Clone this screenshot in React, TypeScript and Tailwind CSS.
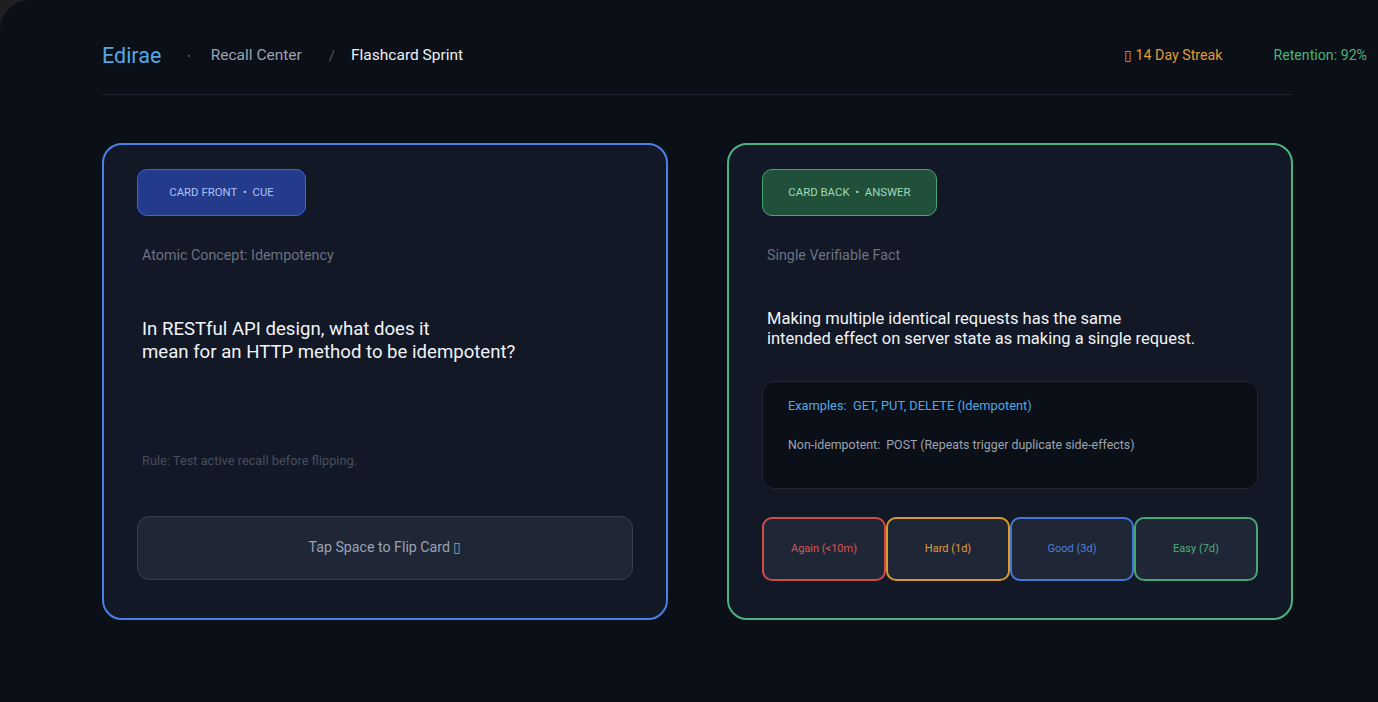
const ratings = [
  { label: 'Again (<10m)', cls: 'border-[#d14b4b] text-[#d9534f]' },
  { label: 'Hard (1d)', cls: 'border-[#d99a2b] text-[#e09b36]' },
  { label: 'Good (3d)', cls: 'border-[#4677d8] text-[#4f7fdc]' },
  { label: 'Easy (7d)', cls: 'border-[#45a673] text-[#4caf7a]' },
];

function Header() {
  return (
    <header className="flex h-10 w-[1265px] items-center justify-between">
      <div className="flex items-center">
        <span className="text-[21.5px] text-[#52a8e3]">Edirae</span>
        <span className="ml-[26px] text-[10px] text-[#4b5563]">•</span>
        <span className="ml-[20px] text-[15.5px] text-[#9aa3b1]">Recall Center</span>
        <span className="ml-[27px] text-[15px] text-[#4b5563]">/</span>
        <span className="ml-[16px] text-[15.5px] text-[#eef0f4]">Flashcard Sprint</span>
      </div>
      <div className="flex items-center text-[14.2px]">
        <span className="text-[#e09b36]">▯ 14 Day Streak</span>
        <span className="ml-[51px] text-[#4caf7a]">Retention: 92%</span>
      </div>
    </header>
  );
}

function FrontCard() {
  return (
    <section className="flex h-[477px] w-[566px] flex-col rounded-[20px] border-2 border-[#4a80e8] bg-[#121826] px-[33px] pt-6">
      <div className="flex h-[47px] w-[169px] items-center justify-center rounded-[10px] border border-[#3f63d6] bg-[#243b8c] text-[11.4px] text-[#aac0f4]">
        CARD FRONT&nbsp;&nbsp;•&nbsp;&nbsp;CUE
      </div>
      <p className="ml-[5px] mt-[29px] text-[14.3px] leading-5 text-[#6b7280]">Atomic Concept: Idempotency</p>
      <p className="ml-[5px] mt-[53px] text-[18.6px] leading-[23px] text-[#f1f3f6]">
        In RESTful API design, what does it
        <br />
        mean for an HTTP method to be idempotent?
      </p>
      <p className="ml-[5px] mt-[88px] text-[12.8px] leading-[18px] text-[#464e5c]">Rule: Test active recall before flipping.</p>
      <button className="mt-[46px] flex h-16 w-full items-center justify-center rounded-[12px] border border-[#343d4d] bg-[#1f2737] text-[14.2px] text-[#9aa3b1]">
        Tap Space to Flip Card ▯
      </button>
    </section>
  );
}

function BackCard() {
  return (
    <section className="flex h-[477px] w-[566px] flex-col rounded-[20px] border-2 border-[#4cb37e] bg-[#121826] px-[33px] pt-6">
      <div className="flex h-[47px] w-[175px] items-center justify-center rounded-[10px] border border-[#45a673] bg-[#20503a] text-[11.4px] text-[#9fd8b6]">
        CARD BACK&nbsp;&nbsp;•&nbsp;&nbsp;ANSWER
      </div>
      <p className="ml-[5px] mt-[29px] text-[14.3px] leading-5 text-[#6b7280]">Single Verifiable Fact</p>
      <p className="ml-[5px] mt-[44px] text-[16.5px] leading-5 text-[#f1f3f6]">
        Making multiple identical requests has the same
        <br />
        intended effect on server state as making a single request.
      </p>
      <div className="mt-[32px] h-[108px] rounded-[12px] border border-[#1f2735] bg-[#0b0f18] pl-[25px] pt-[15px]">
        <p className="text-[12.8px] leading-[18px] text-[#52a8e3]">Examples:&nbsp; GET, PUT, DELETE (Idempotent)</p>
        <p className="mt-[22px] text-[12.4px] leading-4 text-[#9aa3b1]">Non-idempotent:&nbsp; POST (Repeats trigger duplicate side-effects)</p>
      </div>
      <div className="mt-[28px] grid grid-cols-4">
        {ratings.map((r) => (
          <button
            key={r.label}
            className={`flex h-16 items-center justify-center rounded-[10px] border-2 bg-[#1f2737] text-[11px] ${r.cls}`}
          >
            {r.label}
          </button>
        ))}
      </div>
    </section>
  );
}

export default function App() {
  return (
    <div className="min-h-screen bg-[#1f1f23]" style={{ fontFamily: 'Roboto, "Noto Sans", sans-serif' }}>
      <div className="h-[702px] overflow-hidden rounded-tl-[30px] bg-[#0b0f17] pl-[102px] pt-[36px]">
        <Header />
        <div className="mt-[18px] h-px w-[1190px] bg-[#1e2533]" />
        <div className="mt-12 flex gap-[59px]">
          <FrontCard />
          <BackCard />
        </div>
      </div>
    </div>
  );
}
